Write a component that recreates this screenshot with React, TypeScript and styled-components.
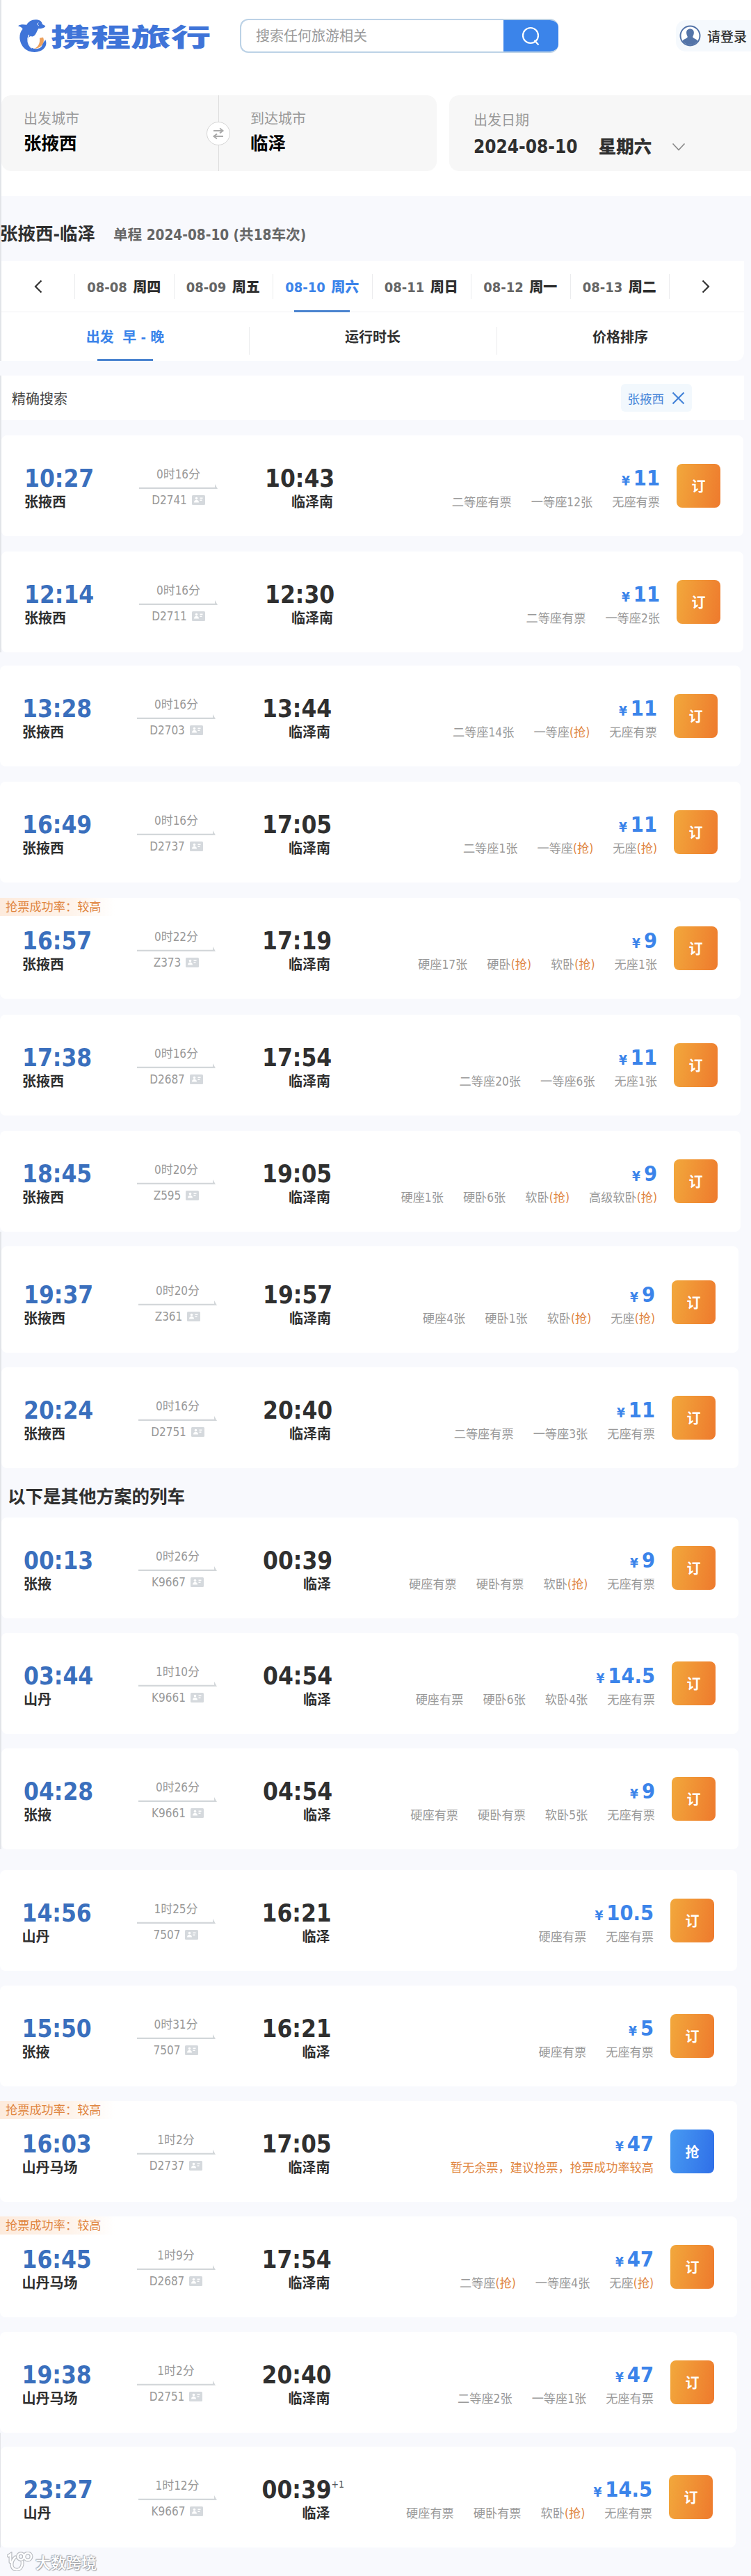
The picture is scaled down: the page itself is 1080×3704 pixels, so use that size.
import React, { FC } from "react";
import styled, { createGlobalStyle, css } from "styled-components";

const theme = {
  colors: {
    blue: "#3b84ea",
    darkBlue: "#3a6fbd",
    dark: "#2f2f2f",
    gray: "#999",
    orange: "#e0853f",
    page: "#f8f9fd",
  },
};

interface ITrain {
  depart: string;
  from: string;
  duration: string;
  code: string;
  arrive: string;
  to: string;
  price: string;
  seats: string[];
  badge?: boolean;
  grab?: boolean;
  nextDay?: boolean;
  note?: string;
}

interface ISection {
  title?: string;
  edge: number;
  inset: number;
  right: number;
  space: number;
  top: number;
  gap: number;
  extra?: number;
  trains: ITrain[];
}

const sections: ISection[] = [
  {
    edge: 2,
    inset: 35,
    right: 1069,
    space: 70,
    top: 22,
    gap: 22.2,
    trains: [
      { depart: "10:27", from: "张掖西", duration: "0时16分", code: "D2741", arrive: "10:43", to: "临泽南", price: "11", seats: ["二等座有票", "一等座12张", "无座有票"] },
      { depart: "12:14", from: "张掖西", duration: "0时16分", code: "D2711", arrive: "12:30", to: "临泽南", price: "11", seats: ["二等座有票", "一等座2张"] },
    ],
  },
  {
    edge: 0,
    inset: 32,
    right: 1065,
    space: 69,
    top: 18.8,
    gap: 22.2,
    trains: [
      { depart: "13:28", from: "张掖西", duration: "0时16分", code: "D2703", arrive: "13:44", to: "临泽南", price: "11", seats: ["二等座14张", "一等座(抢)", "无座有票"] },
      { depart: "16:49", from: "张掖西", duration: "0时16分", code: "D2737", arrive: "17:05", to: "临泽南", price: "11", seats: ["二等座1张", "一等座(抢)", "无座(抢)"] },
      { depart: "16:57", from: "张掖西", duration: "0时22分", code: "Z373", arrive: "17:19", to: "临泽南", price: "9", seats: ["硬座17张", "硬卧(抢)", "软卧(抢)", "无座1张"], badge: true },
      { depart: "17:38", from: "张掖西", duration: "0时16分", code: "D2687", arrive: "17:54", to: "临泽南", price: "11", seats: ["二等座20张", "一等座6张", "无座1张"] },
      { depart: "18:45", from: "张掖西", duration: "0时20分", code: "Z595", arrive: "19:05", to: "临泽南", price: "9", seats: ["硬座1张", "硬卧6张", "软卧(抢)", "高级软卧(抢)"] },
    ],
  },
  {
    edge: 2,
    inset: 34,
    right: 1062,
    space: 68,
    top: 21.2,
    gap: 21,
    extra: 8,
    trains: [
      { depart: "19:37", from: "张掖西", duration: "0时20分", code: "Z361", arrive: "19:57", to: "临泽南", price: "9", seats: ["硬座4张", "硬卧1张", "软卧(抢)", "无座(抢)"] },
      { depart: "20:24", from: "张掖西", duration: "0时16分", code: "D2751", arrive: "20:40", to: "临泽南", price: "11", seats: ["二等座有票", "一等座3张", "无座有票"] },
    ],
  },
  {
    title: "以下是其他方案的列车",
    edge: 2,
    inset: 34,
    right: 1062,
    space: 68,
    top: 0,
    gap: 21,
    trains: [
      { depart: "00:13", from: "张掖", duration: "0时26分", code: "K9667", arrive: "00:39", to: "临泽", price: "9", seats: ["硬座有票", "硬卧有票", "软卧(抢)", "无座有票"] },
      { depart: "03:44", from: "山丹", duration: "1时10分", code: "K9661", arrive: "04:54", to: "临泽", price: "14.5", seats: ["硬座有票", "硬卧6张", "软卧4张", "无座有票"] },
      { depart: "04:28", from: "张掖", duration: "0时26分", code: "K9661", arrive: "04:54", to: "临泽", price: "9", seats: ["硬座有票", "硬卧有票", "软卧5张", "无座有票"] },
    ],
  },
  {
    edge: 0,
    inset: 31.5,
    right: 1060,
    space: 69,
    top: 30,
    gap: 21,
    trains: [
      { depart: "14:56", from: "山丹", duration: "1时25分", code: "7507", arrive: "16:21", to: "临泽", price: "10.5", seats: ["硬座有票", "无座有票"] },
      { depart: "15:50", from: "张掖", duration: "0时31分", code: "7507", arrive: "16:21", to: "临泽", price: "5", seats: ["硬座有票", "无座有票"] },
      { depart: "16:03", from: "山丹马场", duration: "1时2分", code: "D2737", arrive: "17:05", to: "临泽南", price: "47", seats: [], badge: true, grab: true, note: "暂无余票，建议抢票，抢票成功率较高" },
      { depart: "16:45", from: "山丹马场", duration: "1时9分", code: "D2687", arrive: "17:54", to: "临泽南", price: "47", seats: ["二等座(抢)", "一等座4张", "无座(抢)"], badge: true },
      { depart: "19:38", from: "山丹马场", duration: "1时2分", code: "D2751", arrive: "20:40", to: "临泽南", price: "47", seats: ["二等座2张", "一等座1张", "无座有票"] },
    ],
  },
  {
    edge: 1,
    inset: 33.5,
    right: 1058,
    space: 67,
    top: 20.5,
    gap: 21,
    trains: [
      { depart: "23:27", from: "山丹", duration: "1时12分", code: "K9667", arrive: "00:39", to: "临泽", price: "14.5", seats: ["硬座有票", "硬卧有票", "软卧(抢)", "无座有票"], nextDay: true },
    ],
  },
];

const days = [
  ["08-08", "周四"],
  ["08-09", "周五"],
  ["08-10", "周六"],
  ["08-11", "周日"],
  ["08-12", "周一"],
  ["08-13", "周二"],
];

const Logo: FC = () => (
  <LogoRow>
    <svg width="42" height="48" viewBox="75 81 126 144">
      <path
        fill="#3f74d8"
        d="M78 112c9-8 24-7 37-5 8-14 23-24 43-22 15 1 23 9 24 19l14 8c-3 9-16 13-29 11-8 8-8 20-19 31-4 4-10 5-14 1-11 3-13 12-12 23 2 19 16 34 34 33 18-1 26-10 27-22l13-17c10 20-2 51-47 53-36 0-62-26-64-62 0-17 4-28 13-38-5-7-12-11-20-13z"
      />
      <path fill="none" stroke="#fff" strokeWidth="4" d="M125 150c-9 18-7 42 12 58" />
      <path fill="#eda05c" d="M171 164l15-3c9 20-5 47-40 49 17-6 28-22 25-46z" />
      <path fill="none" stroke="#fff" strokeWidth="3" d="M166 98c-6 2-5 11 1 12" />
    </svg>
    <LogoText>携程旅行</LogoText>
  </LogoRow>
);

const IdCard: FC = () => (
  <svg width="19" height="14" viewBox="0 0 19 14">
    <rect width="19" height="14" rx="1.5" fill="#d5d9dd" />
    <circle cx="6.5" cy="4.6" r="1.8" fill="#fff" />
    <path d="M3 10.5c0-5 7-5 7 0zM11.5 3.5h4v1.5h-4zM11.5 6.5h3v1.5h-3z" fill="#fff" />
  </svg>
);

const Arrow: FC = () => (
  <svg width="113" height="8" viewBox="0 0 113 8">
    <path d="M0 5.7h109V1l4 7H0z" fill="#d3d7da" />
  </svg>
);

const Seat: FC<{ text: string }> = ({ text }) => {
  const [name, grab] = text.split("(");
  return (
    <span>
      {name}
      {grab && <GrabText>({grab}</GrabText>}
    </span>
  );
};

const TrainCard: FC<{ train: ITrain; section: ISection; extra: number }> = ({ train, section, extra }) => (
  <Card $inset={section.inset - section.edge} $right={section.right - section.edge} $extra={extra}>
    {train.badge && <Badge>抢票成功率：较高</Badge>}
    <Depart>
      <Time $blue>{train.depart}</Time>
      <Station>{train.from}</Station>
    </Depart>
    <Journey $space={section.space}>
      <span>{train.duration}</span>
      <Arrow />
      <Code>
        {train.code}
        <IdCard />
      </Code>
    </Journey>
    <Arrive>
      <Time>
        {train.arrive}
        {train.nextDay && <NextDay>+1</NextDay>}
      </Time>
      <Station>{train.to}</Station>
    </Arrive>
    <Offer>
      <Price>
        <small>¥</small>
        {train.price}
      </Price>
      <Seats>
        {train.note && <GrabText>{train.note}</GrabText>}
        {train.seats.map((seat) => (
          <Seat key={seat} text={seat} />
        ))}
      </Seats>
    </Offer>
    <BookButton $grab={train.grab}>{train.grab ? "抢" : "订"}</BookButton>
  </Card>
);

const App: FC = () => {
  return (
    <Page>
      <GlobalStyle />
      <Top>
        <Header>
          <Logo />
          <Search>
            <Placeholder>搜索任何旅游相关</Placeholder>
            <SearchButton>
              <svg width="28" height="28" viewBox="0 0 28 28" fill="none" stroke="#fff" strokeWidth="2.2">
                <circle cx="13" cy="13" r="11" />
                <path d="M18.5 20l6 6.5" />
              </svg>
            </SearchButton>
          </Search>
          <Login>
            <svg width="31" height="31" viewBox="0 0 31 31">
              <circle cx="15.5" cy="15.5" r="14" fill="#fff" stroke="#5474a8" strokeWidth="2" />
              <path
                d="M15.5 5.5c4 0 5.8 3 5.3 6.5-.3 2.6-1.3 3.8-1.6 5 .2 2.6 5.5 2.5 7.3 6a13.5 13.5 0 0 1-22 0c1.8-3.5 7.1-3.4 7.3-6-.3-1.2-1.3-2.4-1.6-5-.5-3.5 1.3-6.5 5.3-6.5z"
                fill="#5474a8"
              />
            </svg>
            请登录
          </Login>
        </Header>
        <Filters>
          <Cities>
            <City>
              <FilterLabel>出发城市</FilterLabel>
              <CityName>张掖西</CityName>
            </City>
            <City>
              <FilterLabel>到达城市</FilterLabel>
              <CityName>临泽</CityName>
            </City>
            <Swap>
              <svg width="18" height="18" viewBox="0 0 18 18" fill="none" stroke="#aaa" strokeWidth="2">
                <path d="M2 5h13M11 1.5L15.5 5 11 8.5M16 13H3M7 9.5L2.5 13 7 16.5" />
              </svg>
            </Swap>
          </Cities>
          <DateBox>
            <FilterLabel>出发日期</FilterLabel>
            <DateValue>
              2024-08-10 <b>星期六</b>
              <svg width="20" height="12" viewBox="0 0 20 12" fill="none" stroke="#888" strokeWidth="1.6">
                <path d="M1.5 1.5l8.5 9 8.5-9" />
              </svg>
            </DateValue>
          </DateBox>
        </Filters>
      </Top>
      <TitleRow>
        <h1>张掖西-临泽</h1>
        <span>单程 2024-08-10 (共18车次)</span>
      </TitleRow>
      <Panel>
        <DayRow>
          <Step>
            <svg width="12" height="20" viewBox="0 0 12 20" fill="none" stroke="#333" strokeWidth="2.2">
              <path d="M10.5 1.5L2 10l8.5 8.5" />
            </svg>
          </Step>
          {days.map(([date, week], i) => (
            <Day key={date} $active={i === 2}>
              {date} <b>{week}</b>
            </Day>
          ))}
          <Step>
            <svg width="12" height="20" viewBox="0 0 12 20" fill="none" stroke="#333" strokeWidth="2.2">
              <path d="M1.5 1.5L10 10l-8.5 8.5" />
            </svg>
          </Step>
        </DayRow>
        <SortRow>
          <Sort $active>出发&nbsp; 早 - 晚</Sort>
          <Sort>运行时长</Sort>
          <Sort>价格排序</Sort>
        </SortRow>
      </Panel>
      <Precise>
        精确搜索
        <Tag>
          张掖西
          <svg width="19" height="19" viewBox="0 0 19 19" stroke="#4583d8" strokeWidth="2.2">
            <path d="M1.5 1.5l16 16M17.5 1.5l-16 16" />
          </svg>
        </Tag>
      </Precise>
      {sections.map((section) => (
        <Section key={section.trains[0].depart} $edge={section.edge} $top={section.top} $gap={section.gap}>
          {section.title && <SectionTitle>{section.title}</SectionTitle>}
          {section.trains.map((train, i) => (
            <TrainCard key={train.depart} train={train} section={section} extra={i === 0 ? section.extra || 0 : 0} />
          ))}
        </Section>
      ))}
      <Watermark>
        <svg width="38" height="28" viewBox="0 0 38 28" fill="none" strokeLinecap="round">
          <g stroke="#b9bcc2" strokeWidth="5">
            <path d="M2 6l3-2v11M12 8c-6 5-8 17 2 18 6 0 9-6 8-12" />
            <circle cx="20" cy="7" r="4.5" />
            <circle cx="30" cy="7" r="5" />
          </g>
          <g stroke="#fff" strokeWidth="2.6">
            <path d="M2 6l3-2v11M12 8c-6 5-8 17 2 18 6 0 9-6 8-12" />
            <circle cx="20" cy="7" r="4.5" />
            <circle cx="30" cy="7" r="5" />
          </g>
        </svg>
        大数跨境
      </Watermark>
    </Page>
  );
};

export default App;

const GlobalStyle = createGlobalStyle`
  * {
    box-sizing: border-box;
  }

  body {
    margin: 0;
    background: ${theme.colors.page};
    color: ${theme.colors.dark};
    font-family: "DejaVu Sans Condensed", "DejaVu Sans", "Noto Sans CJK SC", sans-serif;
    font-stretch: condensed;
  }

  svg {
    display: block;
    flex-shrink: 0;
  }
`;

const Page = styled.div`
  width: 1080px;
  height: 3704px;
  overflow: hidden;
`;

const Top = styled.div`
  height: 282px;
  background: #fff;
  border-left: 2px solid #e2e4e8;
`;

const Header = styled.header`
  display: flex;
  height: 137px;
  padding: 27px 0 0 23px;
`;

const LogoRow = styled.div`
  display: flex;
  width: 320px;
`;

const LogoText = styled.span`
  margin-left: 6px;
  color: #3f74d8;
  font-family: "Noto Sans CJK SC", sans-serif;
  font-size: 36px;
  font-weight: 900;
  line-height: 48px;
  transform: scaleX(1.6);
  transform-origin: left center;
  white-space: nowrap;
`;

const Search = styled.div`
  display: flex;
  width: 458px;
  height: 49px;
  border: 2px solid #bcd2e6;
  border-right: none;
  border-radius: 12px;
  overflow: hidden;
`;

const Placeholder = styled.span`
  flex: 1;
  padding-left: 21px;
  color: ${theme.colors.gray};
  font-size: 20px;
  line-height: 46px;
`;

const SearchButton = styled.div`
  display: flex;
  align-items: center;
  justify-content: center;
  width: 79px;
  margin: -2px 0;
  background: ${theme.colors.blue};
`;

const Login = styled.div`
  display: flex;
  align-items: center;
  gap: 9px;
  width: 108px;
  height: 45px;
  margin: 2px 0 0 auto;
  padding-left: 5px;
  border-radius: 14px 0 0 14px;
  background: #f5f9fd;
  font-size: 19px;
  font-weight: 500;
  white-space: nowrap;
`;

const Filters = styled.div`
  display: flex;
  gap: 18px;
  height: 109px;
`;

const Cities = styled.div`
  position: relative;
  display: flex;
  width: 626px;
  border-radius: 14px;
  background: #f7f7f7;
`;

const City = styled.div`
  width: 312px;
  padding: 20px 0 0 32px;

  & + & {
    padding-left: 45px;
    border-left: 1px solid #ddd;
  }
`;

const FilterLabel = styled.div`
  color: ${theme.colors.gray};
  font-size: 20px;
  line-height: 28px;
`;

const CityName = styled.div`
  color: #000;
  font-size: 25.5px;
  font-weight: 700;
  line-height: 43px;
`;

const Swap = styled.span`
  position: absolute;
  top: 38px;
  left: 295px;
  display: flex;
  align-items: center;
  justify-content: center;
  width: 34px;
  height: 34px;
  border: 1px solid #d5d5d5;
  border-radius: 50%;
  background: #fff;
`;

const DateBox = styled.div`
  flex: 1;
  padding: 22px 0 0 35px;
  border-radius: 14px 0 0 14px;
  background: #f7f7f7;
`;

const DateValue = styled.div`
  display: flex;
  align-items: center;
  font-size: 26px;
  font-weight: 700;
  line-height: 48px;
  white-space: nowrap;

  b {
    margin: 0 29px 0 30px;
    font-size: 25.5px;
  }
`;

const TitleRow = styled.div`
  display: flex;
  align-items: baseline;
  gap: 26px;
  height: 93px;
  padding-top: 34px;
  border-left: 2px solid #e2e4e8;

  h1 {
    margin: 0 0 0 -2px;
    font-size: 25.5px;
    line-height: 40px;
  }

  span {
    color: #666;
    font-size: 20.6px;
    font-weight: 700;
  }
`;

const Panel = styled.div`
  width: 1070px;
  height: 144px;
  border-left: 2px solid #e2e4e8;
  border-radius: 0 0 12px 0;
  background: #fff;
`;

const DayRow = styled.div`
  display: flex;
  align-items: center;
  height: 74px;
  border-bottom: 1px solid #f0f1f4;
`;

const Step = styled.div`
  display: flex;
  align-items: center;
  justify-content: center;
  width: 105px;
  height: 36px;
`;

const underline = css`
  &::after {
    content: "";
    position: absolute;
    bottom: 0;
    left: calc(50% - 40px);
    width: 80px;
    height: 3px;
    background: #4b84cf;
  }
`;

const Day = styled.div<{ $active?: boolean }>`
  position: relative;
  width: 142.5px;
  height: 74px;
  color: ${({ $active }) => ($active ? theme.colors.blue : "#666")};
  font-size: 20px;
  font-weight: 700;
  line-height: 76px;
  text-align: center;
  background: linear-gradient(#ebecee, #ebecee) left center / 1px 36px no-repeat;

  b {
    margin-left: 2px;
    color: ${({ $active }) => ($active ? theme.colors.blue : theme.colors.dark)};
  }

  & + ${Step} {
    border-left: 1px solid #ebecee;
  }

  ${({ $active }) => $active && underline}
`;

const SortRow = styled.div`
  display: flex;
  height: 70px;
`;

const Sort = styled.div<{ $active?: boolean }>`
  position: relative;
  width: 357px;
  color: ${({ $active }) => ($active ? theme.colors.blue : theme.colors.dark)};
  font-size: 20px;
  font-weight: 700;
  line-height: 72px;
  text-align: center;

  & + & {
    background: linear-gradient(#ebecee, #ebecee) left 21px / 1px 40px no-repeat;
  }

  ${({ $active }) => $active && underline}
`;

const Precise = styled.div`
  display: flex;
  align-items: center;
  justify-content: space-between;
  width: 1070px;
  height: 64px;
  margin-top: 21px;
  padding: 0 75px 0 15px;
  border-left: 2px solid #e2e4e8;
  background: #fff;
  color: #444;
  font-size: 20px;
`;

const Tag = styled.span`
  display: flex;
  align-items: center;
  gap: 11px;
  height: 40px;
  padding: 0 10px;
  border-radius: 6px;
  background: #f2f8fd;
  color: #4583d8;
  font-size: 17.5px;
`;

const Section = styled.section<{ $edge: number; $top: number; $gap: number }>`
  display: flex;
  flex-direction: column;
  gap: ${({ $gap }) => $gap}px;
  padding-top: ${({ $top }) => $top}px;
  border-left: ${({ $edge }) => $edge}px solid #e2e4e8;
`;

const SectionTitle = styled.h2`
  height: 50px;
  margin: 0;
  padding-left: 9px;
  font-size: 25.5px;
  line-height: 83px;
`;

const Card = styled.div<{ $inset: number; $right: number; $extra: number }>`
  position: relative;
  display: flex;
  width: ${({ $right }) => $right}px;
  height: ${({ $extra }) => 145 + $extra}px;
  padding: ${({ $extra }) => 43 + $extra}px 33px 0 ${({ $inset }) => $inset}px;
  border-radius: 8px;
  background: #fff;
`;

const Badge = styled.span`
  position: absolute;
  top: 0;
  left: 0;
  width: 165px;
  height: 26px;
  padding-left: 8px;
  background: linear-gradient(90deg, #fdebdd, #fef3ea 60%, #fff);
  color: ${theme.colors.orange};
  font-size: 17.2px;
  line-height: 27px;
  white-space: nowrap;
`;

const Depart = styled.div`
  width: 165px;
`;

const Arrive = styled.div`
  width: 98px;
  text-align: right;
`;

const Time = styled.div<{ $blue?: boolean }>`
  position: relative;
  color: ${({ $blue }) => ($blue ? theme.colors.darkBlue : theme.colors.dark)};
  font-size: 35px;
  font-weight: 700;
  line-height: 38px;
  white-space: nowrap;
`;

const NextDay = styled.sup`
  position: absolute;
  top: 2px;
  left: 100px;
  color: #555;
  font-size: 14px;
  font-weight: 400;
  line-height: 18px;
`;

const Station = styled.div`
  margin-top: 1px;
  font-size: 20px;
  font-weight: 700;
  line-height: 28px;
`;

const Journey = styled.div<{ $space: number }>`
  display: flex;
  flex-direction: column;
  align-items: center;
  width: 113px;
  margin-right: ${({ $space }) => $space - 2}px;
  color: ${theme.colors.gray};
  font-size: 17px;
  line-height: 26px;
`;

const Code = styled.div`
  display: flex;
  align-items: center;
  gap: 7px;
  margin-top: 3px;
`;

const Offer = styled.div`
  margin: 0 24px 0 auto;
  text-align: right;
`;

const Price = styled.div`
  color: ${theme.colors.blue};
  font-size: 30.5px;
  font-weight: 700;
  line-height: 38px;

  small {
    margin-right: 5px;
    font-size: 19px;
  }
`;

const Seats = styled.div`
  display: flex;
  justify-content: flex-end;
  gap: 28px;
  color: ${theme.colors.gray};
  font-size: 17.2px;
  line-height: 24px;
  white-space: nowrap;
`;

const GrabText = styled.span`
  color: ${theme.colors.orange};
`;

const BookButton = styled.div<{ $grab?: boolean }>`
  width: 63px;
  height: 63px;
  margin-top: -2px;
  border-radius: 8px;
  background: ${({ $grab }) =>
    $grab ? "linear-gradient(100deg, #489bf2, #2f6fe8)" : "linear-gradient(100deg, #f2a83c, #ee7a2d)"};
  color: #fff;
  font-size: 20px;
  font-weight: 700;
  line-height: 67px;
  text-align: center;
`;

const Watermark = styled.div`
  display: flex;
  align-items: center;
  gap: 3px;
  height: 40px;
  padding-left: 10px;
  color: #fff;
  font-size: 22px;
  font-weight: 500;
  text-shadow: 0 0 2px #8d9097, 1px 1px 1px #a5a8ae, -1px -1px 1px #b5b8be;
`;
